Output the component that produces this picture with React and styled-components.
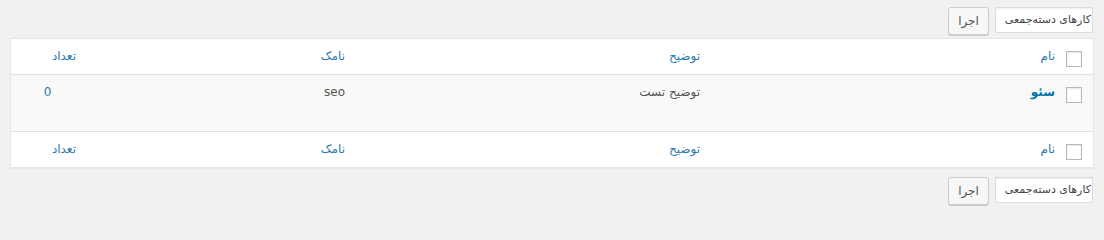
import React from "react";
import styled, { createGlobalStyle } from "styled-components";

const Global = createGlobalStyle`
  html, body { margin: 0; padding: 0; background: #f1f1f1; }
  body { direction: rtl; font-family: Tahoma, "DejaVu Sans", sans-serif; font-size: 12px; color: #444; }
`;

const Page = styled.div`
  padding: 7px 10px 0 10px;
`;

const TableNav = styled.div`
  display: flex;
  align-items: flex-start;
  gap: 6px;
  height: 29px;
  padding-right: 1px;
  margin-top: ${(p) => (p.$bottom ? "9px" : "0")};
`;

const Select = styled.div`
  box-sizing: border-box;
  width: 98px;
  height: 26px;
  background: #fff;
  border: 1px solid #ddd;
  box-shadow: inset 0 1px 2px rgba(0, 0, 0, 0.07);
  color: #444;
  font-size: 11px;
  line-height: 23px;
  padding-right: 1px;
  white-space: nowrap;
`;

const Button = styled.button`
  box-sizing: border-box;
  width: 41px;
  height: 28px;
  background: #f7f7f7;
  border: 1px solid #ccc;
  border-radius: 3px;
  box-shadow: 0 1px 0 #ccc;
  color: #555;
  font-family: inherit;
  font-size: 12px;
  padding: 0;
  line-height: 24px;
`;

const Table = styled.div`
  margin-top: 2px;
  background: #fff;
  border: 1px solid #e5e5e5;
  box-shadow: 0 1px 1px rgba(0, 0, 0, 0.04);
`;

const Row = styled.div`
  display: grid;
  grid-template-columns: 28px 355px 355px 271px 1fr;
  height: ${(p) => p.$h}px;
  background: ${(p) => (p.$alt ? "#f9f9f9" : "#fff")};
  border-top: ${(p) => (p.$top ? "1px solid #e1e1e1" : "none")};
  border-bottom: ${(p) => (p.$bottom ? "1px solid #e1e1e1" : "none")};
`;

const CheckCell = styled.div`
  padding: 12px 11px 0 0;
`;

const Checkbox = styled.span`
  display: block;
  box-sizing: border-box;
  width: 16px;
  height: 16px;
  background: #fff;
  border: 1px solid #b4b9be;
  box-shadow: inset 0 1px 2px rgba(0, 0, 0, 0.1);
`;

const Cell = styled.div`
  padding: 8px ${(p) => p.$pr ?? 10}px 0 10px;
  text-align: ${(p) => (p.$center ? "center" : "right")};
  line-height: 19px;
  color: ${(p) => p.$color || "#555"};
  font-weight: ${(p) => (p.$bold ? 700 : 400)};
  font-size: 12px;
`;

const headers = ["نام", "توضیح", "نامک", "تعداد"];

function HeadRow({ top, bottom }) {
  return (
    <Row $h={35} $top={top} $bottom={bottom}>
      <CheckCell>
        <Checkbox />
      </CheckCell>
      <Cell $color="#2a7ab0">{headers[0]}</Cell>
      <Cell $color="#2a7ab0">{headers[1]}</Cell>
      <Cell $color="#2a7ab0">{headers[2]}</Cell>
      <Cell $color="#2a7ab0" $pr={8}>{headers[3]}</Cell>
    </Row>
  );
}

function Nav({ bottom }) {
  return (
    <TableNav $bottom={bottom}>
      <Select>کارهای دسته‌جمعی</Select>
      <Button>اجرا</Button>
    </TableNav>
  );
}

export default function App() {
  return (
    <Page>
      <Global />
      <Nav />
      <Table>
        <HeadRow bottom />
        <Row $h={56} $alt>
          <CheckCell>
            <Checkbox />
          </CheckCell>
          <Cell $color="#0073aa" $bold>سئو</Cell>
          <Cell $color="#555">توضیح تست</Cell>
          <Cell $color="#555">seo</Cell>
          <Cell $color="#2a7ab0" $center>0</Cell>
        </Row>
        <HeadRow top />
      </Table>
      <Nav bottom />
    </Page>
  );
}
